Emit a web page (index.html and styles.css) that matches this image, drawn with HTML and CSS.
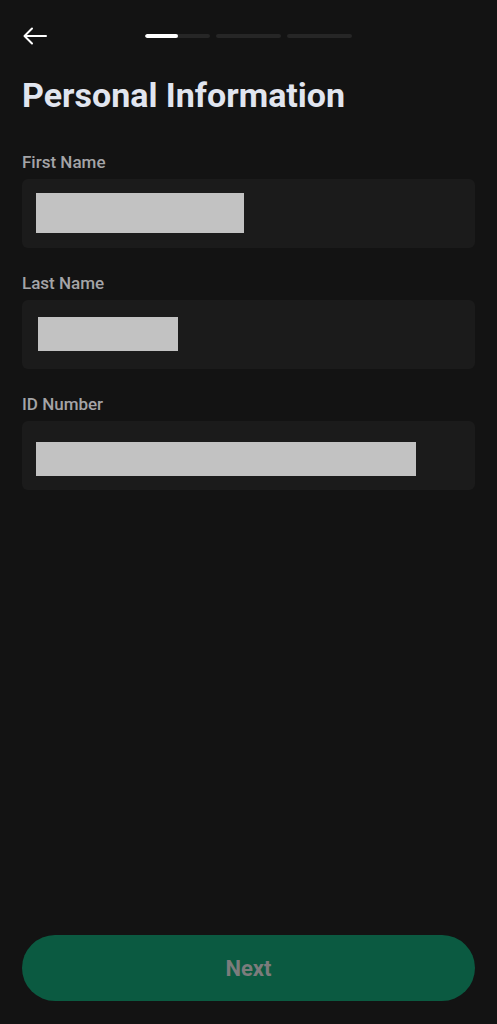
FILE: index.html
```html
<!DOCTYPE html>
<html lang="en">
<head>
  <meta charset="UTF-8" />
  <meta name="viewport" content="width=device-width, initial-scale=1.0" />
  <title>Personal Information</title>
  <link rel="stylesheet" href="styles.css">
</head>
<body>
<div class="screen">
  <header class="top-bar">
    <button class="back-btn" aria-label="Back">
      <svg width="24" height="18" viewBox="0 0 24 18" fill="none" stroke="#fff" stroke-width="2" stroke-linecap="round" stroke-linejoin="round">
        <path d="M23 9H2" />
        <path d="M9 1.5L1.5 9L9 16.5" />
      </svg>
    </button>
    <div class="steps">
      <div class="step"><div class="step-fill"></div></div>
      <div class="step"></div>
      <div class="step"></div>
    </div>
    <div></div>
  </header>

  <h1 class="title">Personal Information</h1>

  <form class="form">
    <div class="field">
      <label>First Name</label>
      <div class="field-box">
        <div class="redact redact-first"></div>
      </div>
    </div>
    <div class="field">
      <label>Last Name</label>
      <div class="field-box">
        <div class="redact redact-last"></div>
      </div>
    </div>
    <div class="field">
      <label>ID Number</label>
      <div class="field-box">
        <div class="redact redact-id"></div>
      </div>
    </div>
  </form>

  <button class="next-btn" type="button">Next</button>
</div>
</body>
</html>
```

FILE: styles.css
```css
* {
  box-sizing: border-box;
}
body {
  margin: 0;
  background: #131313;
  font-family: Roboto, "Liberation Sans", sans-serif;
  color: #e1e5ef;
}
.screen {
  min-height: 100vh;
  display: flex;
  flex-direction: column;
  padding: 0 22px 23px;
}
.top-bar {
  height: 72px;
  display: grid;
  grid-template-columns: 1fr auto 1fr;
  align-items: center;
}
.back-btn {
  background: none;
  border: none;
  padding: 0 0 0 1px;
  width: 30px;
  height: 24px;
  display: flex;
  align-items: center;
  cursor: pointer;
}
.steps {
  display: flex;
  gap: 6px;
}
.step {
  width: 65px;
  height: 4px;
  border-radius: 2px;
  background: #262626;
  overflow: hidden;
}
.step-fill {
  width: 33px;
  height: 100%;
  background: #ffffff;
  border-radius: 2px;
}
.title {
  margin: 3px 0 0;
  font-size: 34px;
  line-height: 40px;
  font-weight: 700;
  color: #e1e5ef;
}
.form {
  flex: 1;
  margin-top: 37px;
}
.field {
  margin-bottom: 25px;
}
.field label {
  display: block;
  font-size: 17px;
  line-height: 20px;
  font-weight: 500;
  color: #a4a4a7;
  margin-bottom: 7px;
}
.field-box {
  height: 69px;
  background: #1b1b1b;
  border-radius: 6px;
  padding-left: 14px;
}
.redact {
  background: #c2c2c2;
}
.redact-first {
  width: 208px;
  height: 40px;
  position: relative;
  top: 14px;
}
.redact-last {
  width: 140px;
  height: 34px;
  margin-left: 2px;
  position: relative;
  top: 17px;
}
.redact-id {
  width: 380px;
  height: 34px;
  position: relative;
  top: 21px;
}
.next-btn {
  width: 100%;
  height: 66px;
  border: none;
  border-radius: 33px;
  background: #0b5a41;
  color: #7c7c7c;
  font-family: Roboto, "Liberation Sans", sans-serif;
  font-size: 22px;
  font-weight: 700;
  cursor: pointer;
}
```
